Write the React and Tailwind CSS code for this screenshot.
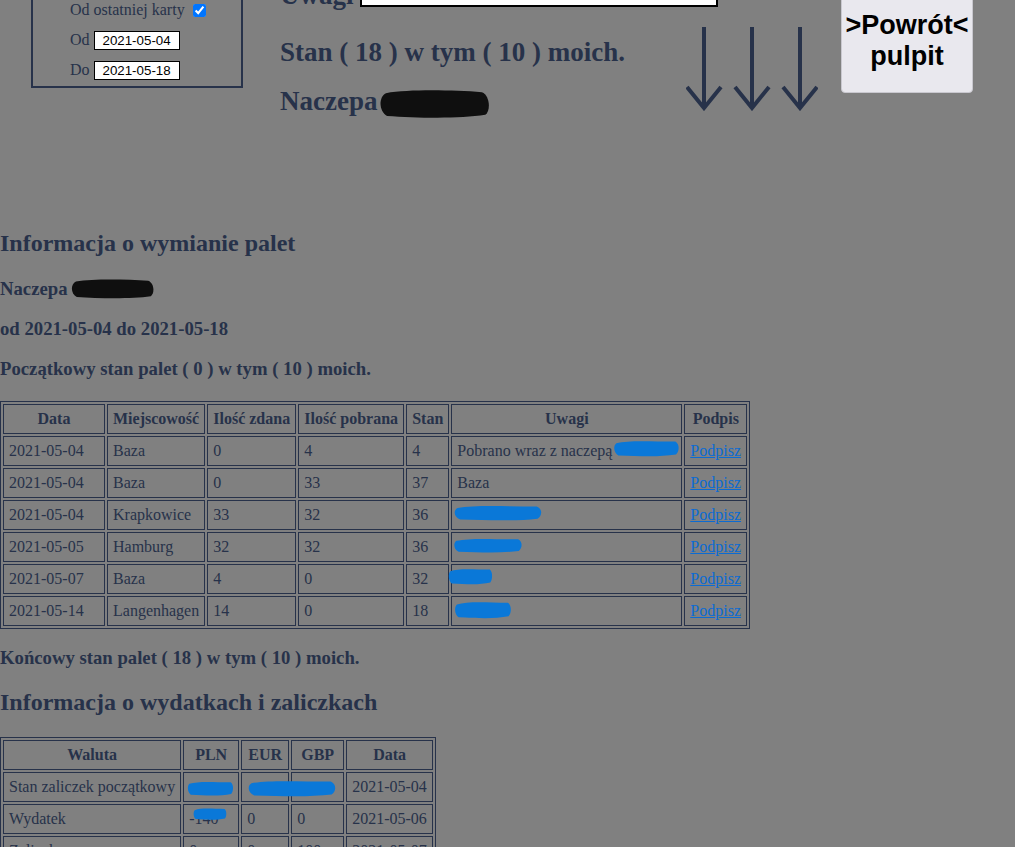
const cell = "whitespace-nowrap border border-[#27324a] px-[5px] py-[5px] leading-[18px]";
const head = "whitespace-nowrap border border-[#27324a] px-[5px] py-[5px] leading-[18px] font-bold text-center";

function Blob({ className }) {
  return (
    <svg viewBox="0 0 100 30" preserveAspectRatio="none" className={className}>
      <path
        d="M7 5 C28 1 66 2 92 4 C99 7 100 22 95 26 C72 30 34 29 8 27 C1 23 0 9 7 5Z"
        fill="#0f0f0f"
      />
    </svg>
  );
}

function Scribble({ className }) {
  return (
    <svg viewBox="0 0 100 22" preserveAspectRatio="none" className={className}>
      <path
        d="M5 5 C24 1 58 3 93 3 C100 6 99 15 94 18 C70 21 40 20 8 19 C1 16 0 8 5 5Z"
        fill="#0a78d8"
      />
    </svg>
  );
}

const palety = [
  ["2021-05-04", "Baza", "0", "4", "4"],
  ["2021-05-04", "Baza", "0", "33", "37"],
  ["2021-05-04", "Krapkowice", "33", "32", "36"],
  ["2021-05-05", "Hamburg", "32", "32", "36"],
  ["2021-05-07", "Baza", "4", "0", "32"],
  ["2021-05-14", "Langenhagen", "14", "0", "18"],
];

function Uwagi({ i }) {
  if (i === 0) {
    return (
      <td className={cell + " relative"}>
        Pobrano wraz z naczepą
        <Scribble className="absolute left-[161px] top-[2px] h-[19px] w-[67px]" />
      </td>
    );
  }
  if (i === 1) return <td className={cell}>Baza</td>;
  const spots = {
    2: "absolute left-[1px] top-[3px] h-[18px] w-[90px]",
    3: "absolute left-[1px] top-[4px] h-[17px] w-[70px]",
    4: "absolute left-[-4px] top-[2px] h-[19px] w-[45px]",
    5: "absolute left-[2px] top-[3px] h-[20px] w-[58px]",
  };
  return (
    <td className={cell + " relative"}>
      <Scribble className={spots[i]} />
    </td>
  );
}

function DateBox({ value }) {
  return (
    <input
      readOnly
      value={value}
      className="ml-[4px] h-[19px] w-[86px] border border-black bg-white text-center font-['Liberation_Sans',sans-serif] text-[13.33px] text-black"
    />
  );
}

export default function App() {
  return (
    <div className="min-h-screen overflow-hidden bg-[#808080] font-['Liberation_Serif',serif] leading-[1.15] text-[#27324a]">
      {/* górny pasek - strona przewinięta */}
      <div className="-mt-[40px] flex h-[250px] items-start">
        <div className="ml-[31px] flex h-[128px] w-[212px] flex-col justify-end border-2 border-[#27324a] pb-[1px] pl-[37px] text-[16px]">
          <div className="flex h-[30px] items-center">
            Od ostatniej karty
            <input type="checkbox" defaultChecked className="ml-[8px] h-[13px] w-[13px]" />
          </div>
          <div className="flex h-[30px] items-center">
            Od
            <DateBox value="2021-05-04" />
          </div>
          <div className="flex h-[30px] items-center">
            Do
            <DateBox value="2021-05-18" />
          </div>
        </div>

        <div className="ml-[37px] flex w-[560px] flex-col pt-[20px] text-[27px] font-bold leading-[31px]">
          <div className="flex h-[31px] items-start">
            <span>Uwagi</span>
            <input readOnly className="ml-[6.5px] mt-[1px] h-[26px] w-[358px] border-2 border-black bg-white" />
          </div>
          <div className="flex items-start">
            <div className="w-[406px]">
              <div className="mt-[26.4px]">Stan ( 18 ) w tym ( 10 ) moich.</div>
              <div className="mt-[18px] flex h-[31px] items-center">
                Naczepa
                <Blob className="ml-[1px] mt-[3px] h-[31px] w-[113px] blur-[0.6px]" />
              </div>
            </div>
            <svg width="132" height="84" viewBox="0 0 132 84" className="mt-[16px]" fill="none" stroke="#27324a" strokeWidth="4">
              <path d="M18 0 V80 M1 60 L18 81 L35 60" />
              <path d="M66 0 V80 M49 60 L66 81 L83 60" />
              <path d="M114 0 V80 M97 60 L114 81 L131 60" />
            </svg>
          </div>
        </div>

        <button className="ml-[1px] mt-[29px] flex h-[104px] w-[132px] flex-col items-center justify-center rounded-[4px] border border-[#c9c8cf] bg-[#e9e8ee] font-['Liberation_Sans',sans-serif] text-[27px] font-bold leading-[31px] text-black">
          <span>&gt;Powrót&lt;</span>
          <span>pulpit</span>
        </button>
      </div>

      <div className="my-[20px] text-[24px] font-bold leading-[27.6px]">Informacja o wymianie palet</div>
      <div className="my-[18.72px] flex items-center text-[18.72px] font-bold leading-[21.5px]">
        Naczepa
        <Blob className="ml-[2px] h-[21px] w-[85px] blur-[0.6px]" />
      </div>
      <div className="my-[18.72px] text-[18.72px] font-bold leading-[21.5px]">od 2021-05-04 do 2021-05-18</div>
      <div className="my-[18.72px] text-[18.72px] font-bold leading-[21.5px]">Początkowy stan palet ( 0 ) w tym ( 10 ) moich.</div>

      <table className="mt-[21px] border-separate border-spacing-[2px] border border-[#27324a] text-[16px]">
        <thead>
          <tr>
            <th className={head + " w-[102px]"}>Data</th>
            <th className={head + " w-[98px]"}>Miejscowość</th>
            <th className={head + " w-[89px]"}>Ilość zdana</th>
            <th className={head + " w-[106px]"}>Ilość pobrana</th>
            <th className={head + " w-[43px]"}>Stan</th>
            <th className={head + " w-[231px]"}>Uwagi</th>
            <th className={head + " w-[63px]"}>Podpis</th>
          </tr>
        </thead>
        <tbody>
          {palety.map((r, i) => (
            <tr key={i}>
              {r.map((v, j) => (
                <td key={j} className={cell}>{v}</td>
              ))}
              <Uwagi i={i} />
              <td className={cell}>
                <a href="#" className="text-[#0b6bd3] underline">Podpisz</a>
              </td>
            </tr>
          ))}
        </tbody>
      </table>

      <div className="my-[18.72px] text-[18.72px] font-bold leading-[21.5px]">Końcowy stan palet ( 18 ) w tym ( 10 ) moich.</div>
      <div className="my-[20px] text-[24px] font-bold leading-[27.6px]">Informacja o wydatkach i zaliczkach</div>

      <table className="mt-[21px] border-separate border-spacing-[2px] border border-[#27324a] text-[16px]">
        <thead>
          <tr>
            <th className={head + " w-[178px]"}>Waluta</th>
            <th className={head + " w-[56px]"}>PLN</th>
            <th className={head + " w-[48px]"}>EUR</th>
            <th className={head + " w-[53px]"}>GBP</th>
            <th className={head + " w-[87px]"}>Data</th>
          </tr>
        </thead>
        <tbody>
          <tr>
            <td className={cell}>Stan zaliczek początkowy</td>
            <td className={cell + " relative"}>
              <Scribble className="absolute left-[3px] top-[7px] h-[17px] w-[47px]" />
            </td>
            <td className={cell + " relative"}>
              <Scribble className="absolute left-[5px] top-[6px] h-[19px] w-[90px]" />
            </td>
            <td className={cell}></td>
            <td className={cell}>2021-05-04</td>
          </tr>
          <tr>
            <td className={cell}>Wydatek</td>
            <td className={cell + " relative"}>
              -140
              <Scribble className="absolute left-[9px] top-[2px] h-[14px] w-[34px]" />
            </td>
            <td className={cell}>0</td>
            <td className={cell}>0</td>
            <td className={cell}>2021-05-06</td>
          </tr>
          <tr>
            <td className={cell}>Zaliczka</td>
            <td className={cell}>0</td>
            <td className={cell}>0</td>
            <td className={cell}>100</td>
            <td className={cell}>2021-05-07</td>
          </tr>
        </tbody>
      </table>
    </div>
  );
}
